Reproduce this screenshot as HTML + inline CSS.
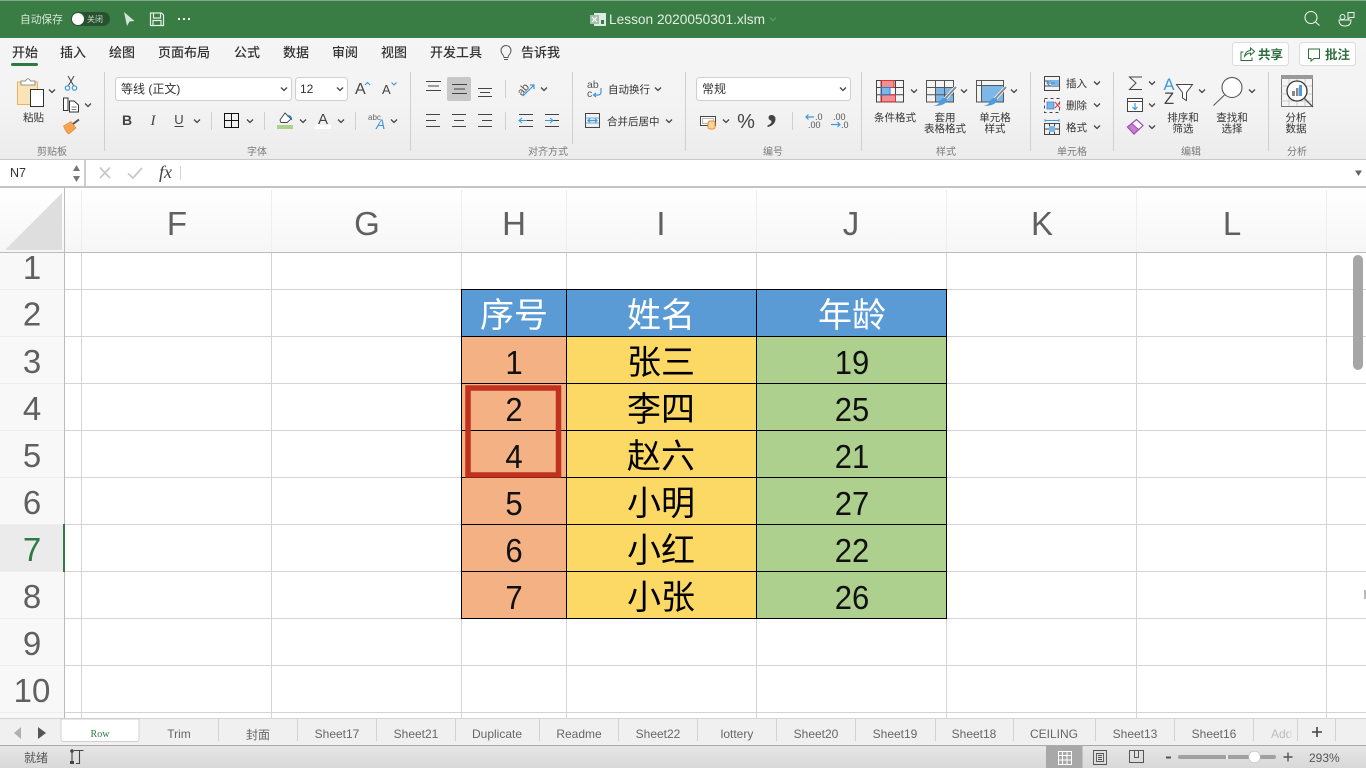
<!DOCTYPE html>
<html lang="zh"><head><meta charset="utf-8"><title>Lesson 2020050301.xlsm</title>
<style>
html,body{margin:0;padding:0;width:1366px;height:768px;overflow:hidden;background:#fff}
svg{display:block;position:absolute;left:0;top:0}
text{font-family:"Liberation Sans","Noto Sans CJK SC",sans-serif;fill:#333}
.tab{font-size:13px;fill:#333;font-weight:500}
.l{font-size:10.5px;fill:#333}
.g{font-size:10px;fill:#7a7a7a;text-anchor:middle}
.m{text-anchor:middle}
.s{font-size:12px;fill:#666;text-anchor:middle}
.hd{font-size:33px;fill:#606060;text-anchor:middle}
.cn{font-size:34px;fill:#000;text-anchor:middle}
.th{font-size:34px;fill:#fff;text-anchor:middle}
.num{font-size:33px;fill:#111;text-anchor:middle}
.ic{fill:none;stroke:#333;stroke-width:1}
.b{fill:none;stroke:#3f97dc;stroke-width:1.2}
.ch{fill:none;stroke:#444;stroke-width:1.3}
</style></head><body>
<svg width="1366" height="768" viewBox="0 0 1366 768" xmlns="http://www.w3.org/2000/svg">
<defs>
<linearGradient id="rib" x1="0" y1="0" x2="0" y2="1"><stop offset="0" stop-color="#f5f5f5"/><stop offset=".55" stop-color="#f3f3f3"/><stop offset="1" stop-color="#ececec"/></linearGradient>
<linearGradient id="hdr" x1="0" y1="0" x2="0" y2="1"><stop offset="0" stop-color="#fff"/><stop offset="1" stop-color="#f6f6f6"/></linearGradient>
<linearGradient id="st" x1="0" y1="0" x2="0" y2="1"><stop offset="0" stop-color="#e6e6e6"/><stop offset="1" stop-color="#d8d8d8"/></linearGradient>
<path id="c" d="M-3 -1.5L0 1.5L3 -1.5"/>
</defs>

<!-- title bar -->
<rect width="1366" height="38" fill="#3a7d44"/>
<rect width="1366" height="1" fill="#7fa888"/>
<text x="20" y="23" style="font-size:10.7px;fill:#d8e6da">自动保存</text>
<rect x="71" y="12" width="39" height="14" rx="7" fill="#27522f"/>
<circle cx="78" cy="19" r="6" fill="#fff"/>
<text x="87" y="22" style="font-size:8px;fill:#cfdcd1">关闭</text>
<path d="M124 12L134.500 21L129.500 21.500L127 26Z" fill="#d6e5d9"/>
<path d="M150.500 13H161.500L163.500 15V25.500H150.500ZM153.500 13V18H160.500V13M153 25.500V20.500H161V25.500" fill="none" stroke="#e4eee6" stroke-width="1.200"/>
<circle cx="179" cy="19" r="1.100" fill="#fff"/><circle cx="184" cy="19" r="1.100" fill="#fff"/><circle cx="189" cy="19" r="1.100" fill="#fff"/>
<rect x="594" y="13" width="12" height="13" fill="#dfe9e1"/><rect x="590" y="15" width="9" height="9" fill="#9fc2a6"/><path d="M592 17L597 22M597 17L592 22" stroke="#fff" stroke-width="1.200"/><rect x="601" y="20" width="3" height="4" fill="#3a7d44"/>
<text x="609" y="24" textLength="156" lengthAdjust="spacingAndGlyphs" style="font-size:13.500px;fill:#e3ede5">Lesson 2020050301.xlsm</text>
<use href="#c" x="773" y="19" style="fill:none;stroke:#6d9f76;stroke-width:1"/>
<circle cx="1311" cy="17.500" r="6" fill="none" stroke="#eef4ef" stroke-width="1.100"/><path d="M1315.500 22L1319.500 25.500" stroke="#eef4ef" stroke-width="1.100"/>
<path d="M1339 20H1351Q1351 26 1345 26Q1339 26 1339 20ZM1348 12.500H1354V17.500H1350L1348 19Z" fill="none" stroke="#eef4ef" stroke-width="1"/><circle cx="1342.500" cy="17" r="2.500" fill="none" stroke="#eef4ef" stroke-width="1"/>

<!-- ribbon -->
<rect y="38" width="1366" height="121" fill="url(#rib)"/>
<rect y="159" width="1366" height="1" fill="#c9c9c9"/>
<text class="tab" x="12" y="57">开始</text>
<rect x="11" y="63" width="27" height="3" rx="1.500" fill="#2f7a43"/>
<text class="tab" x="60" y="57">插入</text>
<text class="tab" x="109" y="57">绘图</text>
<text class="tab" x="158" y="57">页面布局</text>
<text class="tab" x="234" y="57">公式</text>
<text class="tab" x="283" y="57">数据</text>
<text class="tab" x="332" y="57">审阅</text>
<text class="tab" x="381" y="57">视图</text>
<text class="tab" x="430" y="57">开发工具</text>
<path d="M504 57.500C504 55 501 54 501 50.500A5 5 0 0 1 511 50.500C511 54 508 55 508 57.500ZM504 59.500H508" fill="none" stroke="#555" stroke-width="1"/>
<text class="tab" x="521" y="57">告诉我</text>

<rect x="1232.500" y="42.500" width="56" height="23" rx="3" fill="#fff" stroke="#dcdcdc"/>
<path d="M1243.500 52H1241V60.500H1252V57.500M1244.500 56.500C1245 52.500 1248 50.500 1250.500 50.500V48L1254.500 51.500L1250.500 55V53C1248 53 1246 54.500 1244.500 56.500Z" fill="none" stroke="#2e6e3e" stroke-width="1"/>
<text x="1258" y="59" style="font-size:12.500px;fill:#2e6e3e;font-weight:700">共享</text>
<rect x="1299.500" y="42.500" width="56" height="23" rx="3" fill="#fff" stroke="#dcdcdc"/>
<path d="M1308.500 49H1319.500V58.500H1314L1311 61V58.500H1308.500Z" fill="none" stroke="#2e6e3e" stroke-width="1"/>
<text x="1325" y="59" style="font-size:12.500px;fill:#2e6e3e;font-weight:700">批注</text>

<!-- group separators -->
<g stroke="#d0d0d0"><path d="M104.500 72V151M410.500 72V151M572.500 72V144M685.500 72V151M861.500 72V151M1030.500 72V151M1113.500 72V151M1268.500 72V151"/>
<path d="M211.500 112V130M264.500 112V130M355.500 112V130M505.500 80V98M505.500 112V130M792.500 112V130"/></g>
<text class="g" x="52" y="155">剪贴板</text>
<text class="g" x="257" y="155">字体</text>
<text class="g" x="548" y="155">对齐方式</text>
<text class="g" x="773" y="155">编号</text>
<text class="g" x="946" y="155">样式</text>
<text class="g" x="1072" y="155">单元格</text>
<text class="g" x="1191" y="155">编辑</text>
<text class="g" x="1297" y="155">分析</text>

<!-- clipboard -->
<rect x="17.500" y="82" width="20" height="22.500" fill="#fbe3b8" stroke="#eeb25f"/>
<path d="M21 85V81H25.500Q28 76.500 30.500 81H35V85Z" fill="#fff" stroke="#777" stroke-width=".8"/>
<rect x="30.500" y="89.500" width="13" height="17" fill="#fff" stroke="#333"/>
<use href="#c" class="ch" x="52" y="91"/>
<text class="l m" x="33.500" y="121">粘贴</text>
<path d="M68 76L73.500 85.500M74 76L68.500 85.500" stroke="#444" fill="none"/><circle cx="67.500" cy="88" r="2.200" class="b"/><circle cx="74.500" cy="88" r="2.200" class="b"/>
<path d="M63.500 98H68V110.500H63.500ZM69.500 101H74L78.500 105V112H69.500Z" class="ic" style="fill:#fff"/><path d="M71.500 107H76.500M71.500 109.500H76.500" stroke="#555" stroke-width=".8"/>
<use href="#c" class="ch" x="88" y="105"/>
<path d="M63.500 126L71 121.500L76 128L69 134Q66 133 63.500 126Z" fill="#f3a358" stroke="#e8872b" stroke-width=".6"/><path d="M73 124L79 119.500" stroke="#555" stroke-width="2" fill="none"/>

<!-- font -->
<rect x="115.500" y="77.500" width="176" height="23" rx="3" fill="#fff" stroke="#cfcfcf"/>
<text x="121" y="93" style="font-size:12px;fill:#333">等线 (正文)</text>
<use href="#c" class="ch" x="284" y="89"/>
<rect x="295.500" y="77.500" width="52" height="23" rx="3" fill="#fff" stroke="#cfcfcf"/>
<text x="300" y="93" style="font-size:12px;fill:#333">12</text>
<use href="#c" class="ch" x="340" y="89"/>
<text x="355" y="94" style="font-size:16px;fill:#444">A</text><path d="M365 85L367.500 82.500L370 85" fill="none" stroke="#3f97dc" stroke-width="1.100"/>
<text x="382" y="94" style="font-size:13px;fill:#444">A</text><path d="M391.500 82.500L394 85L396.500 82.500" fill="none" stroke="#3f97dc" stroke-width="1.100"/>
<text class="m" x="127" y="125" style="font-size:14px;font-weight:700;fill:#444">B</text>
<text class="m" x="153" y="125" style="font-size:15px;font-style:italic;font-family:'Liberation Serif',serif;fill:#444">I</text>
<text class="m" x="179" y="124" style="font-size:13px;fill:#444">U</text><path d="M174.500 126.500H183.500" stroke="#444"/>
<use href="#c" class="ch" x="197" y="121"/>
<path d="M224.500 113.500H238.500V127.500H224.500ZM231.500 113.500V127.500M224.500 120.500H238.500" fill="none" stroke="#111" stroke-width="1"/>
<use href="#c" class="ch" x="250" y="121"/>
<path d="M280 120L285 113L291 119L287 122.500H281Z" fill="#fff" stroke="#444" stroke-width=".9"/><path d="M287 116Q291.500 115 291.500 120" fill="none" stroke="#2b7fd0" stroke-width="1.300"/>
<rect x="277" y="125" width="16" height="4" fill="#aed08e"/>
<use href="#c" class="ch" x="303" y="121"/>
<text class="m" x="323" y="124" style="font-size:15px;fill:#444">A</text><rect x="315" y="125" width="16" height="4" fill="#fff"/>
<use href="#c" class="ch" x="341" y="121"/>
<text x="368" y="120" style="font-size:8px;fill:#666">abc</text><text x="376" y="129" style="font-size:14px;font-style:italic;fill:#3f97dc">A</text>
<use href="#c" class="ch" x="394" y="121"/>

<!-- alignment -->
<rect x="447" y="77" width="24" height="24" rx="2" fill="#c8c8c8"/>
<g stroke="#444" fill="none">
<path d="M426 81.500H441M428 86H439M426 90.500H441"/>
<path d="M452 84.500H467M454 89H465M452 93.500H467"/>
<path d="M478 88.500H492M480 92.500H490M478 96.500H492"/>
<path d="M426 114.500H440M426 120.500H436M426 126.500H440"/>
<path d="M452 114.500H466M454 120.500H464M452 126.500H466"/>
<path d="M478 114.500H492M482 120.500H492M478 126.500H492"/>
<path d="M519 114.500H533M527 120.500H533M519 126.500H533"/>
<path d="M545 114.500H559M553 120.500H559M545 126.500H559"/>
</g>
<path d="M527 120.500H519M522 118L519 120.500L522 123M545 120.500H553M550 118L553 120.500L550 123" class="b" style="stroke-width:1"/>
<text x="517" y="94" transform="rotate(-50 522 90)" style="font-size:11px;fill:#555">ab</text>
<path d="M523 96L534 85M530 85H534V89" class="b"/>
<use href="#c" class="ch" x="544" y="89"/>
<text x="587" y="88" style="font-size:10.500px;fill:#555">ab</text><text x="587" y="97" style="font-size:10.500px;fill:#555">c</text>
<path d="M601 88V92Q601 95 598 95H594M596 93L593.500 95L596 97" class="b"/>
<text class="l" x="608" y="93">自动换行</text><use href="#c" class="ch" x="658" y="89"/>
<rect x="585.500" y="113.500" width="14" height="14" fill="none" stroke="#444"/><path d="M585.500 118H599.500M585.500 123H599.500" stroke="#3f97dc" stroke-width=".7"/><path d="M588 120.500H597M590 118.500L588 120.500L590 122.500M595 118.500L597 120.500L595 122.500" class="b"/>
<text class="l" x="607" y="125">合并后居中</text><use href="#c" class="ch" x="669" y="121"/>

<!-- number -->
<rect x="696.500" y="77.500" width="154" height="23" rx="3" fill="#fff" stroke="#cfcfcf"/>
<text x="702" y="93" style="font-size:12px;fill:#333">常规</text>
<use href="#c" class="ch" x="843" y="89"/>
<rect x="700.500" y="116.500" width="15" height="9" fill="#fff" stroke="#444"/><rect x="702.500" y="118.500" width="11" height="5" fill="none" stroke="#888" stroke-width=".6"/>
<rect x="708" y="121" width="7" height="8" rx="2" fill="#fbd49c" stroke="#ec8a2a"/>
<use href="#c" class="ch" x="726" y="121"/>
<text class="m" x="746" y="128" style="font-size:20px;fill:#444">%</text>
<text class="m" x="772" y="121" style="font-size:40px;font-weight:700;font-family:'Liberation Serif',serif;fill:#444">,</text>
<path d="M814 117H806M808.500 114.500L806 117L808.500 119.500M831 124.500H840M837.500 122L840 124.500L837.500 127" class="b"/>
<text x="815" y="120" style="font-size:9px;fill:#555">.0</text><text x="808" y="128" style="font-size:9px;fill:#555">.00</text>
<text x="833" y="120" style="font-size:9px;fill:#555">.00</text><text x="841" y="128" style="font-size:9px;fill:#555">.0</text>

<!-- styles -->
<g transform="translate(876,80)">
<rect x="5" width="13" height="7.300" fill="#ef8f96"/><rect x="5" y="14.700" width="15" height="7.300" fill="#ef8f96"/><rect x="5" y="7.300" width="9" height="7.400" fill="#7db7e8"/>
<path d="M.5.500H27.500V22H.5ZM.5 7.500H27.500M.5 14.800H27.500M5.500.5V22M19.500.5V22" fill="none" stroke="#444" stroke-width="1"/>
<rect x="5" y=".5" width="13" height="7" fill="none" stroke="#d33"/><rect x="5" y="14.800" width="14.500" height="7" fill="none" stroke="#d33"/><rect x="5" y="7.500" width="9" height="7" fill="none" stroke="#2b7fd0"/>
</g>
<use href="#c" class="ch" x="914" y="91"/>
<text class="l m" x="895" y="121">条件格式</text>
<g transform="translate(926,80)">
<rect x="10" y="7.500" width="18" height="15" fill="#7db7e8"/>
<path d="M.5.500H27.500V22H.5ZM.5 7.500H27.500M.5 14.800H27.500M9.500.5V22M18.500.5V22" fill="none" stroke="#555" stroke-width="1"/>
<path d="M18 20L30 7" stroke="#fff" stroke-width="3.500"/><path d="M18 20L30 7" stroke="#888" stroke-width="2"/><path d="M7 26Q13 25 14 21Q17 16 21 19Q21 26 7 26Z" fill="#4f9be0"/>
</g>
<use href="#c" class="ch" x="964" y="91"/>
<text class="l m" x="945" y="121">套用</text><text class="l m" x="945" y="132">表格格式</text>
<g transform="translate(976,80)">
<rect x="5" y="5.500" width="22" height="17" fill="#7db7e8"/>
<path d="M.5.500H27.500V22H.5ZM.5 5.500H27.500M5.500.5V22" fill="none" stroke="#555" stroke-width="1"/>
<path d="M18 20L30 7" stroke="#fff" stroke-width="3.500"/><path d="M18 20L30 7" stroke="#888" stroke-width="2"/><path d="M7 26Q13 25 14 21Q17 16 21 19Q21 26 7 26Z" fill="#4f9be0"/>
</g>
<use href="#c" class="ch" x="1014" y="91"/>
<text class="l m" x="995" y="121">单元格</text><text class="l m" x="995" y="132">样式</text>

<!-- cells -->
<g fill="none" stroke="#444">
<path d="M1044.500 76.500H1059.500V90.500H1044.500ZM1044.500 76.500V90.500M1044.500 81H1059.500M1044.500 86H1059.500"/>
<path d="M1044.500 98.500H1059.500V112.500H1044.500Z" stroke-dasharray="3 3"/>
<path d="M1044.500 123.500H1059.500V134.500H1044.500ZM1044.500 129H1059.500M1049.500 123.500V134.500M1054.500 123.500V134.500"/>
</g>
<rect x="1051" y="80" width="8" height="6" fill="#7db7e8"/><path d="M1055 83H1047M1049.500 80.500L1047 83L1049.500 85.500" class="b"/>
<rect x="1047" y="102" width="7" height="7" fill="#7db7e8" stroke="#2b7fd0" stroke-width=".7"/><path d="M1055 102L1060 108M1060 102L1055 108" stroke="#e44" stroke-width="1.100"/>
<rect x="1049" y="126" width="6" height="6" fill="#7db7e8"/><path d="M1045 120.500H1059M1045 119V122M1059 119V122" class="b" style="stroke-width:.9"/>
<text class="l" x="1066" y="87">插入</text><use href="#c" class="ch" x="1097" y="83"/>
<text class="l" x="1066" y="109">删除</text><use href="#c" class="ch" x="1097" y="105"/>
<text class="l" x="1066" y="131">格式</text><use href="#c" class="ch" x="1097" y="127"/>

<!-- editing -->
<path d="M1142 77H1129.500L1136 83L1129.500 89.500H1142" fill="none" stroke="#444"/><use href="#c" class="ch" x="1152" y="83"/>
<rect x="1127.500" y="98.500" width="15" height="13" fill="#fff" stroke="#444"/><path d="M1127.500 101.500H1142.500" stroke="#444"/><path d="M1135 103V109.500M1132.500 107L1135 109.500L1137.500 107" class="b"/><use href="#c" class="ch" x="1152" y="105"/>
<path d="M1127.500 127L1136.500 119.500L1143 125.500L1134 134Z" fill="#fff" stroke="#a04db0" stroke-width="1.200"/><path d="M1127.500 127L1132 123.500L1138.500 129.500L1134 134Z" fill="#c77fd4" stroke="#a04db0"/><use href="#c" class="ch" x="1152" y="127"/>
<text x="1163.500" y="90" style="font-size:16.500px;fill:#3f97dc">A</text><text x="1164" y="104" style="font-size:16.500px;fill:#444">Z</text>
<path d="M1176.500 84.500H1192.500L1186.500 92.500V100.500L1182.500 98V92.500Z" fill="#fff" stroke="#444"/><use href="#c" class="ch" x="1202" y="91"/>
<text class="l m" x="1183" y="121">排序和</text><text class="l m" x="1183" y="132">筛选</text>
<circle cx="1232" cy="87.500" r="10" fill="#fff" stroke="#444"/><path d="M1224.500 95L1213.500 105.500" stroke="#555"/><use href="#c" class="ch" x="1252" y="91"/>
<text class="l m" x="1232" y="121">查找和</text><text class="l m" x="1232" y="132">选择</text>

<!-- analyze -->
<rect x="1281.500" y="75.500" width="31" height="31" fill="#f4f4f4" stroke="#777"/><rect x="1281" y="75" width="32" height="4" fill="#999"/>
<path d="M1281.500 86H1312M1281.500 94H1312M1281.500 101H1312M1289 79V106M1297 79V106M1305 79V106" stroke="#ccc" fill="none"/>
<circle cx="1297" cy="91" r="10" fill="#fff" stroke="#333" stroke-width="1.300"/>
<rect x="1292" y="91" width="3" height="5" fill="#888"/><rect x="1296" y="88" width="2.500" height="8" fill="#888"/><rect x="1299" y="85" width="3" height="11" fill="#4f9be0"/>
<path d="M1304 98L1313 107" stroke="#555" stroke-width="1.300"/>
<text class="l m" x="1296" y="121">分析</text><text class="l m" x="1296" y="132">数据</text>

<!-- formula bar -->
<rect y="160" width="1366" height="26" fill="#fff"/>
<rect x="84" y="160" width="2" height="26" fill="#cfcfcf"/>
<rect y="186" width="1366" height="2" fill="#c4c4c4"/>
<text x="10" y="177" style="font-size:12.500px;fill:#333">N7</text>
<path d="M73 171L76.500 165L80 171ZM73 176L76.500 182L80 176Z" fill="#777"/>
<path d="M100 167.500L110 178M110 167.500L100 178" stroke="#c9c9c9" stroke-width="1.800"/>
<path d="M128 173.500L133 178L142 168" fill="none" stroke="#c9c9c9" stroke-width="1.800"/>
<text x="159" y="178" style="font-size:18px;font-style:italic;font-family:'Liberation Serif',serif;fill:#444">fx</text>
<path d="M180.500 166V180" stroke="#d5d5d5"/>
<path d="M1355 170.500H1362L1358.500 176Z" fill="#666"/>

<!-- column headers -->
<rect y="188" width="1366" height="64" fill="url(#hdr)"/>
<path d="M5 250L62 193V250Z" fill="#dedede"/>
<rect y="252" width="64" height="466" fill="#f8f8f8"/>
<rect y="524" width="64" height="47" fill="#ebebeb"/>
<!-- grid -->
<g stroke="#d4d4d4" fill="none">
<path d="M64 289.500H1366M64 336.500H1366M64 383.500H1366M64 430.500H1366M64 477.500H1366M64 524.500H1366M64 571.500H1366M64 618.500H1366M64 665.500H1366M64 712.500H1366"/>
<path d="M81.500 252V718M271.500 252V718M461.500 252V718M566.500 252V718M756.500 252V718M946.500 252V718M1136.500 252V718M1326.500 252V718"/>
</g>
<g stroke="#eeeeee" fill="none"><path d="M81.500 190V252M271.500 190V252M461.500 190V252M566.500 190V252M756.500 190V252M946.500 190V252M1136.500 190V252M1326.500 190V252M0 289.500H64M0 336.500H64M0 383.500H64M0 430.500H64M0 477.500H64M0 524.500H64M0 571.500H64M0 618.500H64M0 665.500H64M0 712.500H64"/></g>
<rect x="0" y="252" width="1366" height="1" fill="#bcbcbc"/>
<rect x="64" y="188" width="1" height="530" fill="#bcbcbc"/>
<rect x="63" y="524" width="2" height="48" fill="#2f7a43"/>
<text class="hd" x="177" y="235">F</text>
<text class="hd" x="367" y="235">G</text>
<text class="hd" x="514" y="235">H</text>
<text class="hd" x="661" y="235">I</text>
<text class="hd" x="851" y="235">J</text>
<text class="hd" x="1042" y="235">K</text>
<text class="hd" x="1232" y="235">L</text>
<text class="hd" x="32" y="279">1</text>
<text class="hd" x="32" y="325.500">2</text>
<text class="hd" x="32" y="373">3</text>
<text class="hd" x="32" y="420">4</text>
<text class="hd" x="32" y="467">5</text>
<text class="hd" x="32" y="514">6</text>
<text class="hd" x="32" y="561" style="fill:#2f7a43">7</text>
<text class="hd" x="32" y="608">8</text>
<text class="hd" x="32" y="655">9</text>
<text class="hd" x="32" y="702">10</text>

<!-- table -->
<rect x="461" y="289" width="105" height="47" fill="#5b9bd5"/><rect x="566" y="289" width="190" height="47" fill="#5b9bd5"/><rect x="756" y="289" width="190" height="47" fill="#5b9bd5"/>
<rect x="461" y="336" width="105" height="282" fill="#f4b183"/><rect x="566" y="336" width="190" height="282" fill="#fbd964"/><rect x="756" y="336" width="190" height="282" fill="#aed08e"/>
<path d="M461.500 289V619M566.500 289V619M756.500 289V619M946.500 289V619M461 289.500H947M461 336.500H947M461 383.500H947M461 430.500H947M461 477.500H947M461 524.500H947M461 571.500H947M461 618.500H947" stroke="#000" fill="none"/>
<text class="th" x="514" y="327">序号</text><text class="th" x="661" y="327">姓名</text><text class="th" x="852" y="327">年龄</text>
<text class="num" x="514" y="374" textLength="17.300" lengthAdjust="spacingAndGlyphs">1</text><text class="cn" x="661" y="374">张三</text><text class="num" x="852" y="374" textLength="34.500" lengthAdjust="spacingAndGlyphs">19</text>
<text class="num" x="514" y="421" textLength="17.300" lengthAdjust="spacingAndGlyphs">2</text><text class="cn" x="661" y="421">李四</text><text class="num" x="852" y="421" textLength="34.500" lengthAdjust="spacingAndGlyphs">25</text>
<text class="num" x="514" y="468" textLength="17.300" lengthAdjust="spacingAndGlyphs">4</text><text class="cn" x="661" y="468">赵六</text><text class="num" x="852" y="468" textLength="34.500" lengthAdjust="spacingAndGlyphs">21</text>
<text class="num" x="514" y="515" textLength="17.300" lengthAdjust="spacingAndGlyphs">5</text><text class="cn" x="661" y="515">小明</text><text class="num" x="852" y="515" textLength="34.500" lengthAdjust="spacingAndGlyphs">27</text>
<text class="num" x="514" y="562" textLength="17.300" lengthAdjust="spacingAndGlyphs">6</text><text class="cn" x="661" y="562">小红</text><text class="num" x="852" y="562" textLength="34.500" lengthAdjust="spacingAndGlyphs">22</text>
<text class="num" x="514" y="609" textLength="17.300" lengthAdjust="spacingAndGlyphs">7</text><text class="cn" x="661" y="609">小张</text><text class="num" x="852" y="609" textLength="34.500" lengthAdjust="spacingAndGlyphs">26</text>
<rect x="468" y="388" width="90.500" height="87" fill="none" stroke="#c0311f" stroke-width="5.500"/>

<!-- scrollbar -->
<rect x="1353" y="255" width="10" height="115" rx="5" fill="#a6a6a6"/>
<rect x="1364" y="590" width="2" height="9" fill="#bbb"/>

<!-- sheet tabs -->
<rect y="718" width="1366" height="27" fill="#f0f0f0"/>
<rect y="718" width="1366" height="1" fill="#d4d4d4"/>
<rect y="745" width="1366" height="1" fill="#a9a9a9"/>
<path d="M61 719H139V739Q139 741.500 136.500 741.500H63.500Q61 741.500 61 739Z" fill="#fff" stroke="#c2c2c2" stroke-width=".7"/>
<path d="M21 727V739L14 733Z" fill="#b0b0b0"/><path d="M38 727V739L46 733Z" fill="#555"/>
<g stroke="#d2d2d2"><path d="M218.500 719V741M297.500 719V741M376.500 719V741M455.500 719V741M539.500 719V741M618.500 719V741M697.500 719V741M776.500 719V741M855.500 719V741M935.500 719V741M1013.500 719V741M1095.500 719V741M1174.500 719V741M1253.500 719V741M1297.500 719V741M1335.500 719V741"/></g>
<text class="m" x="100" y="737" style="font-size:10px;font-family:'Liberation Serif',serif;fill:#2f7a43">Row</text>
<text class="s" x="179" y="738">Trim</text><text class="s" x="258" y="739">封面</text><text class="s" x="337" y="738">Sheet17</text><text class="s" x="416" y="738">Sheet21</text><text class="s" x="497" y="738">Duplicate</text><text class="s" x="579" y="738">Readme</text><text class="s" x="658" y="738">Sheet22</text><text class="s" x="737" y="738">lottery</text><text class="s" x="816" y="738">Sheet20</text><text class="s" x="895" y="738">Sheet19</text><text class="s" x="974" y="738">Sheet18</text><text class="s" x="1054" y="738">CEILING</text><text class="s" x="1135" y="738">Sheet13</text><text class="s" x="1214" y="738">Sheet16</text>
<text x="1271" y="738" style="font-size:12px;fill:#bbb">Add</text>
<rect x="1289" y="720" width="8" height="20" fill="#f0f0f0" opacity=".7"/>
<path d="M1317 727V737M1312 732H1322" stroke="#444" stroke-width="1.600"/>

<!-- status -->
<rect y="746" width="1366" height="22" fill="url(#st)"/>
<text x="24" y="762" style="font-size:12px;fill:#555">就绪</text>
<circle cx="72" cy="751" r="1.800" fill="#444"/><rect x="70" y="761" width="4" height="3" fill="#444"/>
<path d="M72 752V762M74 750.500H83.500M79.500 750.500V763.500H76" fill="none" stroke="#444" stroke-width="1.100"/>
<rect x="1046" y="746" width="36.500" height="22" fill="#a8a8a8"/>
<path d="M1058.500 751.500H1071.500V764.500H1058.500ZM1058.500 755.500H1071.500M1058.500 760H1071.500M1062.500 751.500V764.500M1067 751.500V764.500" fill="none" stroke="#fff" stroke-width="1"/>
<path d="M1093.500 750.500H1106.500V764.500H1093.500ZM1096.500 753.500H1103.500V761.500H1096.500ZM1098 755.500H1102M1098 757.500H1102M1098 759.500H1102" fill="none" stroke="#555" stroke-width=".9"/>
<path d="M1129.500 750.500H1143.500V762.500H1129.500ZM1134.500 750.500V757.500H1138.500V750.500" fill="none" stroke="#555" stroke-width="1"/>
<rect x="1166" y="756.500" width="5" height="2" fill="#555"/>
<rect x="1178" y="755" width="98" height="4" rx="2" fill="#a0a0a0"/><rect x="1226" y="755" width="2" height="4" fill="#eee"/>
<circle cx="1254.500" cy="757" r="5.800" fill="#fff" stroke="#bdbdbd" stroke-width=".6"/>
<path d="M1288 752.500V761.500M1283.500 757H1292.500" stroke="#555" stroke-width="1.400"/>
<text x="1309" y="762" style="font-size:12px;fill:#555">293%</text>
</svg>
</body></html>
